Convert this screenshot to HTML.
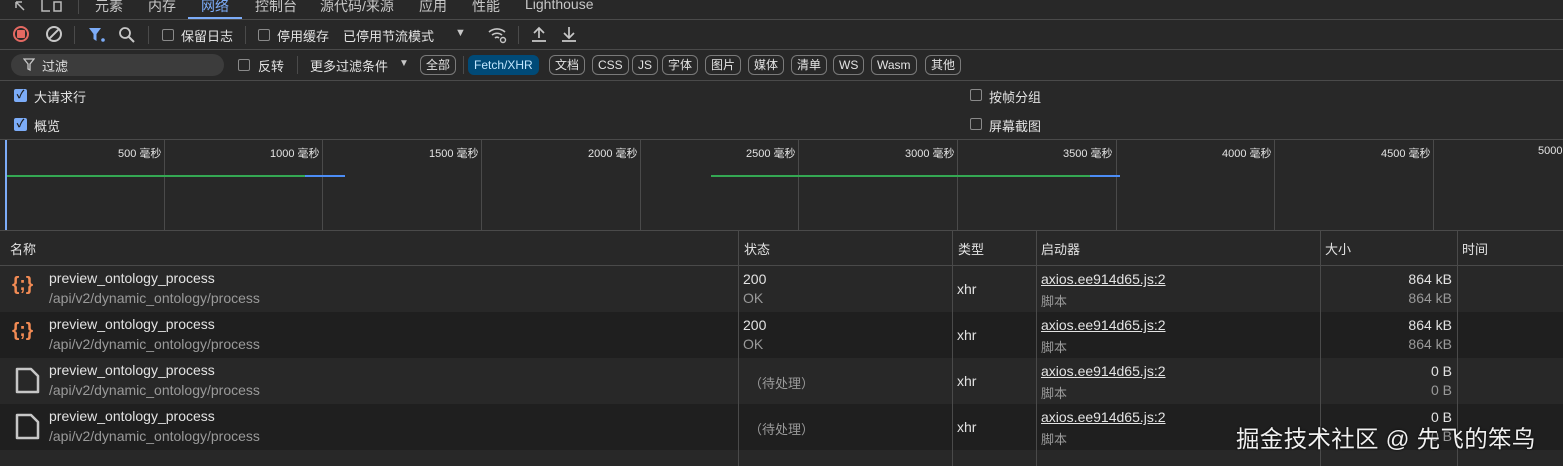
<!DOCTYPE html><html><head><meta charset="utf-8"><style>
*{margin:0;padding:0;box-sizing:border-box}
body{width:1563px;height:466px;background:#282828;color:#e3e3e3;font-family:"Liberation Sans","Noto Sans CJK SC",sans-serif;font-size:13px;position:relative;overflow:hidden}
.a{position:absolute;white-space:nowrap}
.hl{position:absolute;left:0;width:1563px;height:1px;background:#4a4a4a}
.vl{position:absolute;width:1px;background:#4a4a4a}
.cb{position:absolute;width:12px;height:12px;border:1px solid #8a8a8a;border-radius:2px}
.cbc{position:absolute;width:13px;height:13px;background:#7cacf8;border-radius:2px;color:#1f1f1f;font-size:11px;line-height:13px;text-align:center;font-weight:bold}
.pill{position:absolute;top:55px;height:20px;border:1px solid #7a7a7a;border-radius:6px;font-size:12px;line-height:18px;padding:0 5px;color:#e3e3e3}
.tl{position:absolute;font-size:11px;top:145px}
.row{position:absolute;left:0;width:1563px;height:46px}
.nm{position:absolute;left:49px;font-size:14px;color:#e3e3e3}
.sub{color:#9a9a9a}
u{text-decoration:underline}
</style></head><body>
<!-- tabs -->
<svg class="a" style="left:14px;top:0" width="60" height="14"><path d="M2 2l8 8M2 2v6M2 2h6" stroke="#bbb" stroke-width="1.5" fill="none"/><path d="M28 0v11h8M40 2h7v9h-7z" stroke="#bbb" stroke-width="1.5" fill="none"/></svg>
<div class="vl" style="left:78px;top:0;height:14px"></div>
<div class="a" style="top:-4px;left:95px;font-size:14px;color:#c7c7c7">元素</div>
<div class="a" style="top:-4px;left:148px;font-size:14px;color:#c7c7c7">内存</div>
<div class="a" style="top:-4px;left:201px;font-size:14px;color:#7cacf8">网络</div>
<div class="a" style="top:17px;left:188px;width:54px;height:2px;background:#7cacf8"></div>
<div class="a" style="top:-4px;left:255px;font-size:14px;color:#c7c7c7">控制台</div>
<div class="a" style="top:-4px;left:320px;font-size:14px;color:#c7c7c7">源代码/来源</div>
<div class="a" style="top:-4px;left:419px;font-size:14px;color:#c7c7c7">应用</div>
<div class="a" style="top:-4px;left:472px;font-size:14px;color:#c7c7c7">性能</div>
<div class="a" style="top:-4px;left:525px;font-size:14px;color:#c7c7c7">Lighthouse</div>
<div class="hl" style="top:19px"></div>
<!-- toolbar -->
<div class="a" style="left:13px;top:26px;width:16px;height:16px;border:2px solid #e46962;border-radius:50%"></div>
<div class="a" style="left:17px;top:30px;width:8px;height:8px;background:#e46962;border-radius:1px"></div>
<div class="a" style="left:46px;top:26px;width:16px;height:16px;border:2px solid #c7c7c7;border-radius:50%"></div>
<div class="a" style="left:47px;top:33px;width:14px;height:2px;background:#c7c7c7;transform:rotate(-45deg)"></div>
<div class="vl" style="left:74px;top:26px;height:18px"></div>
<svg class="a" style="left:88px;top:27px" width="18" height="16"><path d="M1 1h12l-4.5 6v7l-3-2V7z" fill="#7cacf8"/><circle cx="15" cy="13" r="1.8" fill="#7cacf8"/></svg>
<svg class="a" style="left:118px;top:26px" width="18" height="18"><circle cx="7" cy="7" r="5" stroke="#c7c7c7" stroke-width="1.8" fill="none"/><path d="M11 11l5 5" stroke="#c7c7c7" stroke-width="2"/></svg>
<div class="vl" style="left:148px;top:26px;height:18px"></div>
<div class="cb" style="left:162px;top:29px"></div>
<div class="a" style="left:181px;top:26px">保留日志</div>
<div class="vl" style="left:245px;top:26px;height:18px"></div>
<div class="cb" style="left:258px;top:29px"></div>
<div class="a" style="left:277px;top:26px">停用缓存</div>
<div class="a" style="left:343px;top:26px">已停用节流模式</div>
<div class="a" style="left:455px;top:27px;font-size:11px;color:#c7c7c7">▼</div>
<svg class="a" style="left:487px;top:25px" width="22" height="20"><path d="M2 7a12 12 0 0 1 16 0M5 10a8 8 0 0 1 10 0M8 13a3 3 0 0 1 4 0" stroke="#c7c7c7" stroke-width="1.6" fill="none"/><circle cx="16" cy="15" r="2.5" stroke="#c7c7c7" stroke-width="1.4" fill="none"/></svg>
<div class="vl" style="left:518px;top:26px;height:18px"></div>
<svg class="a" style="left:530px;top:25px" width="18" height="18"><path d="M9 13V3M4 8l5-5 5 5M2 16h14" stroke="#c7c7c7" stroke-width="1.7" fill="none"/></svg>
<svg class="a" style="left:560px;top:25px" width="18" height="18"><path d="M9 2v11M4 8l5 5 5-5M2 16h14" stroke="#c7c7c7" stroke-width="1.7" fill="none"/></svg>
<div class="hl" style="top:49px"></div>
<!-- filter -->
<div class="a" style="left:11px;top:54px;width:213px;height:22px;background:#3c3c3c;border-radius:11px"></div>
<svg class="a" style="left:23px;top:58px" width="12" height="14"><path d="M1 1h10l-4 5v6l-2-1V6z" stroke="#c7c7c7" stroke-width="1.3" fill="none"/></svg>
<div class="a" style="left:42px;top:56px">过滤</div>
<div class="cb" style="left:238px;top:59px"></div>
<div class="a" style="left:258px;top:56px">反转</div>
<div class="vl" style="left:297px;top:56px;height:18px"></div>
<div class="a" style="left:310px;top:56px">更多过滤条件</div>
<div class="a" style="left:399px;top:58px;font-size:10px;color:#c7c7c7">▼</div>
<div class="pill" style="left:420px">全部</div>
<div class="vl" style="left:463px;top:56px;height:18px"></div>
<div class="pill" style="left:468px;background:#004a77;border-color:#004a77;color:#c2e7ff">Fetch/XHR</div>
<div class="pill" style="left:549px">文档</div>
<div class="pill" style="left:592px">CSS</div>
<div class="pill" style="left:632px">JS</div>
<div class="pill" style="left:662px">字体</div>
<div class="pill" style="left:705px">图片</div>
<div class="pill" style="left:748px">媒体</div>
<div class="pill" style="left:791px">清单</div>
<div class="pill" style="left:833px">WS</div>
<div class="pill" style="left:871px">Wasm</div>
<div class="pill" style="left:925px">其他</div>
<div class="hl" style="top:80px"></div>
<!-- options -->
<div class="cbc" style="left:14px;top:89px">✓</div><div class="a" style="left:34px;top:87px">大请求行</div>
<div class="cbc" style="left:14px;top:118px">✓</div><div class="a" style="left:34px;top:116px">概览</div>
<div class="cb" style="left:970px;top:89px"></div><div class="a" style="left:989px;top:87px">按帧分组</div>
<div class="cb" style="left:970px;top:118px"></div><div class="a" style="left:989px;top:116px">屏幕截图</div>
<div class="hl" style="top:139px"></div>
<!-- timeline -->
<div class="a" style="left:5px;top:140px;width:2px;height:90px;background:#7cacf8"></div>
<div class="vl" style="left:164px;top:140px;height:90px"></div>
<div class="vl" style="left:322px;top:140px;height:90px"></div>
<div class="vl" style="left:481px;top:140px;height:90px"></div>
<div class="vl" style="left:640px;top:140px;height:90px"></div>
<div class="vl" style="left:798px;top:140px;height:90px"></div>
<div class="vl" style="left:957px;top:140px;height:90px"></div>
<div class="vl" style="left:1116px;top:140px;height:90px"></div>
<div class="vl" style="left:1274px;top:140px;height:90px"></div>
<div class="vl" style="left:1433px;top:140px;height:90px"></div>
<div class="tl" style="left:118px">500 毫秒</div>
<div class="tl" style="left:270px">1000 毫秒</div>
<div class="tl" style="left:429px">1500 毫秒</div>
<div class="tl" style="left:588px">2000 毫秒</div>
<div class="tl" style="left:746px">2500 毫秒</div>
<div class="tl" style="left:905px">3000 毫秒</div>
<div class="tl" style="left:1063px">3500 毫秒</div>
<div class="tl" style="left:1222px">4000 毫秒</div>
<div class="tl" style="left:1381px">4500 毫秒</div>
<div class="tl" style="left:1538px">5000</div>
<div class="a" style="left:7px;top:175px;width:298px;height:2px;background:#34a853"></div>
<div class="a" style="left:305px;top:175px;width:40px;height:2px;background:#4c8df6"></div>
<div class="a" style="left:711px;top:175px;width:379px;height:2px;background:#34a853"></div>
<div class="a" style="left:1090px;top:175px;width:30px;height:2px;background:#4c8df6"></div>
<div class="hl" style="top:230px"></div>
<!-- header -->
<div class="a" style="left:10px;top:239px">名称</div>
<div class="a" style="left:744px;top:239px">状态</div>
<div class="a" style="left:958px;top:239px">类型</div>
<div class="a" style="left:1041px;top:239px">启动器</div>
<div class="a" style="left:1325px;top:239px">大小</div>
<div class="a" style="left:1462px;top:239px">时间</div>
<div class="hl" style="top:265px"></div>
<!-- rows -->
<div class="row" style="top:266px;background:#282828"></div>
<div class="row" style="top:312px;background:#1f1f1f"></div>
<div class="row" style="top:358px;background:#282828"></div>
<div class="row" style="top:404px;background:#1f1f1f"></div>
<div class="vl" style="left:738px;top:231px;height:235px"></div>
<div class="vl" style="left:952px;top:231px;height:235px"></div>
<div class="vl" style="left:1036px;top:231px;height:235px"></div>
<div class="vl" style="left:1320px;top:231px;height:235px"></div>
<div class="vl" style="left:1457px;top:231px;height:235px"></div>

<div class="a" style="left:12px;top:274px;font-size:19px;font-weight:bold;color:#f28b54">{;}</div>
<div class="a" style="left:12px;top:320px;font-size:19px;font-weight:bold;color:#f28b54">{;}</div>
<svg class="a" style="left:15px;top:367px" width="26" height="28"><path d="M2 2h14l7 7v16H2z" fill="none" stroke="#c7c7c7" stroke-width="2.5" stroke-linejoin="round"/></svg>
<svg class="a" style="left:15px;top:413px" width="26" height="28"><path d="M2 2h14l7 7v16H2z" fill="none" stroke="#c7c7c7" stroke-width="2.5" stroke-linejoin="round"/></svg>

<div class="nm" style="top:270px">preview_ontology_process</div><div class="nm sub" style="top:290px">/api/v2/dynamic_ontology/process</div>
<div class="nm" style="top:316px">preview_ontology_process</div><div class="nm sub" style="top:336px">/api/v2/dynamic_ontology/process</div>
<div class="nm" style="top:362px">preview_ontology_process</div><div class="nm sub" style="top:382px">/api/v2/dynamic_ontology/process</div>
<div class="nm" style="top:408px">preview_ontology_process</div><div class="nm sub" style="top:428px">/api/v2/dynamic_ontology/process</div>

<div class="a" style="left:743px;top:271px;font-size:14px">200</div><div class="a sub" style="left:743px;top:290px;font-size:14px">OK</div>
<div class="a" style="left:743px;top:317px;font-size:14px">200</div><div class="a sub" style="left:743px;top:336px;font-size:14px">OK</div>
<div class="a sub" style="left:749px;top:373px">（待处理）</div>
<div class="a sub" style="left:749px;top:419px">（待处理）</div>

<div class="a" style="left:957px;top:281px;font-size:14px">xhr</div>
<div class="a" style="left:957px;top:327px;font-size:14px">xhr</div>
<div class="a" style="left:957px;top:373px;font-size:14px">xhr</div>
<div class="a" style="left:957px;top:419px;font-size:14px">xhr</div>

<div class="a" style="left:1041px;top:271px;font-size:14px"><u>axios.ee914d65.js:2</u></div><div class="a sub" style="left:1041px;top:291px">脚本</div>
<div class="a" style="left:1041px;top:317px;font-size:14px"><u>axios.ee914d65.js:2</u></div><div class="a sub" style="left:1041px;top:337px">脚本</div>
<div class="a" style="left:1041px;top:363px;font-size:14px"><u>axios.ee914d65.js:2</u></div><div class="a sub" style="left:1041px;top:383px">脚本</div>
<div class="a" style="left:1041px;top:409px;font-size:14px"><u>axios.ee914d65.js:2</u></div><div class="a sub" style="left:1041px;top:429px">脚本</div>

<div class="a" style="right:111px;top:271px;font-size:14px">864 kB</div><div class="a sub" style="right:111px;top:290px;font-size:14px">864 kB</div>
<div class="a" style="right:111px;top:317px;font-size:14px">864 kB</div><div class="a sub" style="right:111px;top:336px;font-size:14px">864 kB</div>
<div class="a" style="right:111px;top:363px;font-size:14px">0 B</div><div class="a sub" style="right:111px;top:382px;font-size:14px">0 B</div>
<div class="a" style="right:111px;top:409px;font-size:14px">0 B</div><div class="a sub" style="right:111px;top:428px;font-size:14px">0 B</div>

<div class="a" style="left:1236px;top:420px;font-size:23.5px;letter-spacing:0.3px;color:#f0f0f0;text-shadow:0 0 2px #000">掘金技术社区 @ 先飞的笨鸟</div>
</body></html>
